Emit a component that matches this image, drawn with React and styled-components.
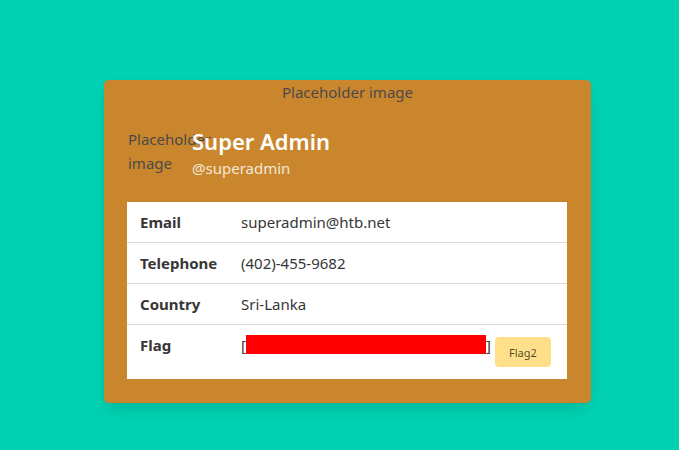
import styled, { createGlobalStyle } from 'styled-components'

const Global = createGlobalStyle`
  body {
    margin: 0;
    background: #00d1b2;
    font-family: 'Noto Sans', 'Open Sans', sans-serif;
    color: #4a4a4a;
  }
`

const Page = styled.div`
  min-height: 450px;
  padding: 80px 0 0 104px;
  box-sizing: border-box;
`

const Card = styled.div`
  width: 487px;
  height: 323px;
  box-sizing: border-box;
  background: #ca862d;
  border-radius: 5px;
  box-shadow: 0 8px 16px -4px rgba(10, 10, 10, 0.15), 0 0 0 1px rgba(10, 10, 10, 0.02);
  display: flex;
  flex-direction: column;
`

const TopImage = styled.div`
  text-align: center;
  font-size: 15px;
  line-height: 24px;
  height: 24px;
`

const Content = styled.div`
  padding: 23px 24px 24px 23px;
  display: flex;
  flex-direction: column;
  gap: 22px;
`

const Media = styled.div`
  display: flex;
  align-items: flex-start;
  padding-left: 1px;
`

const Figure = styled.div`
  width: 64px;
  font-size: 15px;
  line-height: 24px;
  flex-shrink: 0;
`

const Names = styled.div`
  display: flex;
  flex-direction: column;
  position: relative;
  z-index: 1;
`

const Title = styled.div`
  color: #fff;
  font-weight: 600;
  font-size: 22px;
  line-height: 28px;
`

const Subtitle = styled.div`
  color: #f3e6d6;
  font-size: 15px;
  line-height: 24px;
  margin-top: 1px;
`

const Table = styled.div`
  background: #fff;
  width: 440px;
  display: flex;
  flex-direction: column;
`

const Row = styled.div`
  display: flex;
  align-items: flex-start;
  height: ${p => p.$h}px;
  border-bottom: ${p => (p.$last ? 'none' : '1px solid #dbdbdb')};
  box-sizing: border-box;
  font-size: 15px;
  line-height: 24px;
  color: #363636;
  padding-top: 8px;
`

const Label = styled.div`
  width: 101px;
  padding-left: 13px;
  font-weight: 700;
  flex-shrink: 0;
`

const Value = styled.div`
  display: flex;
  align-items: flex-start;
`

const Redacted = styled.span`
  display: inline-block;
  width: 240px;
  height: 19px;
  background: #ff0000;
  margin: 2px 0 0 0;
`

const FlagButton = styled.button`
  margin-left: 4px;
  margin-top: 4px;
  width: 56px;
  height: 30px;
  border: none;
  border-radius: 4px;
  background: #ffe08a;
  color: rgba(0, 0, 0, 0.7);
  font-family: inherit;
  font-size: 11px;
  padding: 0;
`

const rows = [
  ['Email', 'superadmin@htb.net'],
  ['Telephone', '(402)-455-9682'],
  ['Country', 'Sri-Lanka'],
]

export default function App() {
  return (
    <Page>
      <Global />
      <Card>
        <TopImage>Placeholder image</TopImage>
        <Content>
          <Media>
            <Figure>Placeholder image</Figure>
            <Names>
              <Title>Super Admin</Title>
              <Subtitle>@superadmin</Subtitle>
            </Names>
          </Media>
          <Table>
            {rows.map(([k, v]) => (
              <Row key={k} $h={41}>
                <Label>{k}</Label>
                <Value>{v}</Value>
              </Row>
            ))}
            <Row $h={54} $last>
              <Label>Flag</Label>
              <Value>
                <span>[</span>
                <Redacted />
                <span>]</span>
                <FlagButton>Flag2</FlagButton>
              </Value>
            </Row>
          </Table>
        </Content>
      </Card>
    </Page>
  )
}
